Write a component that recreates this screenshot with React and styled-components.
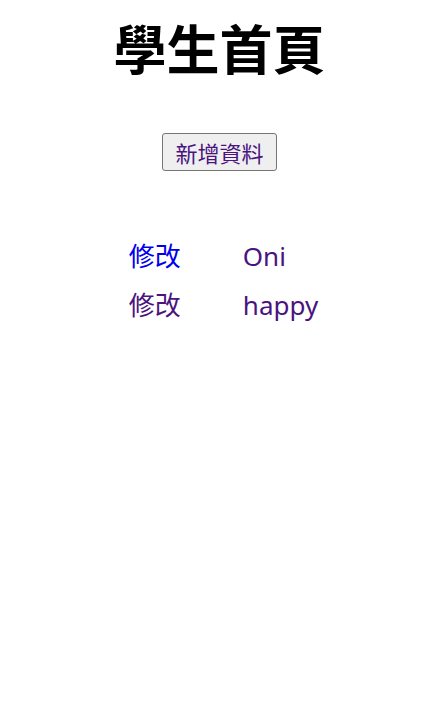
import React from "react";
import styled, { createGlobalStyle } from "styled-components";

const Global = createGlobalStyle`
  html, body { margin: 0; padding: 0; background: #fff; }
  body { font-family: "Noto Sans", "Noto Sans CJK TC", sans-serif; }
`;

const Page = styled.div`
  display: flex;
  flex-direction: column;
  align-items: center;
  padding-top: 8px;
`;

const Title = styled.h1`
  margin: 0;
  font-family: "Noto Sans CJK TC", sans-serif;
  font-size: 53px;
  font-weight: 700;
  line-height: 78px;
  color: #000;
`;

const AddButton = styled.button`
  margin-top: 47px;
  height: 38px;
  padding: 0 12px;
  font-family: "Noto Sans CJK TC", sans-serif;
  font-size: 22px;
  color: #4a1480;
  background: #efefef;
  border: 1px solid #767676;
  border-radius: 3px;
`;

const Table = styled.div`
  margin-top: 68px;
  display: grid;
  grid-template-columns: 114px auto;
  row-gap: 14px;
  margin-left: 8px;
`;

const Cell = styled.span`
  font-family: "Noto Sans", "Noto Sans CJK TC", sans-serif;
  font-size: 26px;
  line-height: 35px;
  color: ${(p) => (p.$fresh ? "#0000ee" : "#4a1480")};
`;

export default function App() {
  return (
    <>
      <Global />
      <Page>
        <Title>學生首頁</Title>
        <AddButton>新增資料</AddButton>
        <Table>
          <Cell $fresh>修改</Cell>
          <Cell>Oni</Cell>
          <Cell>修改</Cell>
          <Cell>happy</Cell>
        </Table>
      </Page>
    </>
  );
}
